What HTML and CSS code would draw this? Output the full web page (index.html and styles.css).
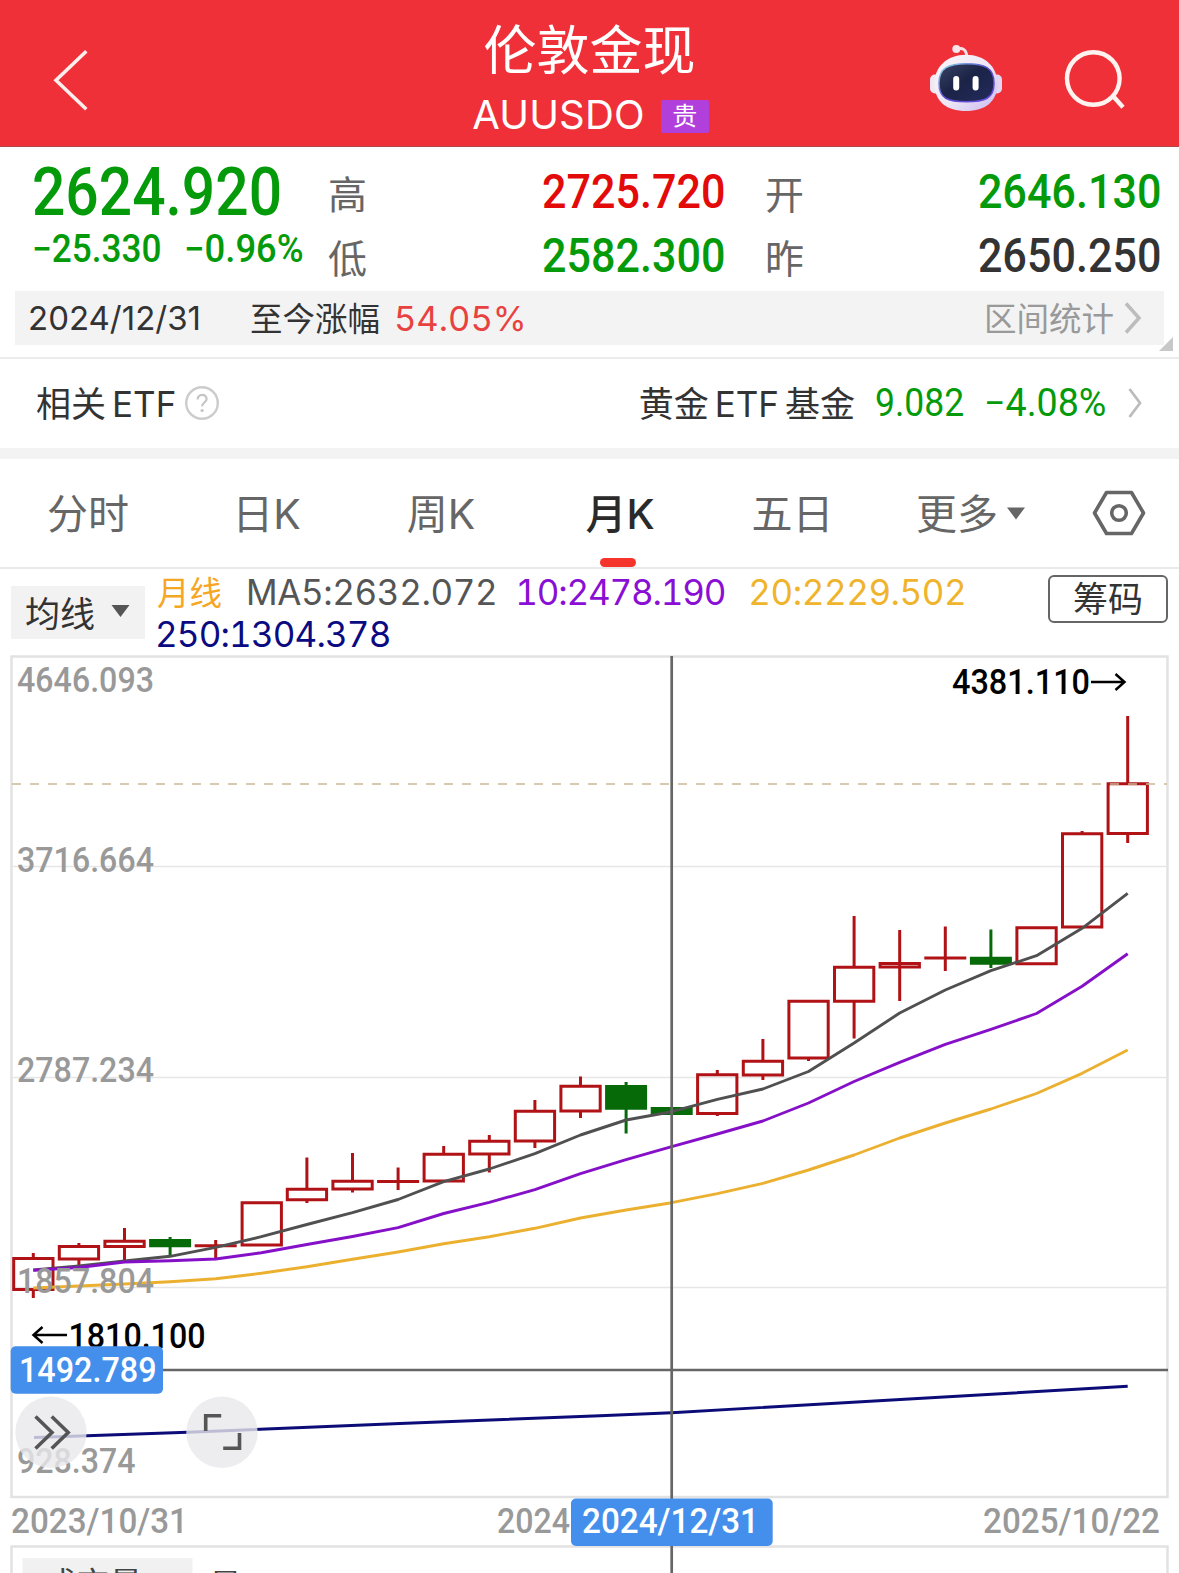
FILE: index.html
```html
<!DOCTYPE html>
<html lang="zh-CN">
<head>
<meta charset="utf-8">
<title>伦敦金现 AUUSDO</title>
<link rel="stylesheet" href="styles.css">
</head>
<body>
<header class="topbar">
  <svg class="back" width="40" height="66" viewBox="51 47 40 66"><path d="M86.3 51.3 56 80.2l30.3 29"/></svg>
  <div class="heading">
    <h1>伦敦金现</h1>
    <div class="symbol"><span>AUUSDO</span><b class="badge">贵</b></div>
  </div>
  <svg class="tools" width="210" height="80" viewBox="920 38 210 80">
    <defs>
      <linearGradient id="shell" x1="0" y1="0" x2="1" y2="1"><stop offset="0" stop-color="#fdf6f8"/><stop offset=".55" stop-color="#ece6f6"/><stop offset="1" stop-color="#c9b8f0"/></linearGradient>
      <linearGradient id="rim" x1="0" y1="0" x2="1" y2="1"><stop offset="0" stop-color="#8fe0e8"/><stop offset=".5" stop-color="#5a48c8"/><stop offset="1" stop-color="#6a4ee0"/></linearGradient>
      <linearGradient id="visor" x1="0" y1="0" x2="1" y2="1"><stop offset="0" stop-color="#3a4365"/><stop offset=".45" stop-color="#1b2347"/><stop offset="1" stop-color="#232c5c"/></linearGradient>
    </defs>
    <path d="M956 49.500c7-2.500 10.500.5 10.700 7" fill="none" stroke="#f6dfe6" stroke-width="3"/>
    <circle cx="956.300" cy="49" r="4" fill="#f9e6ec"/>
    <rect x="930" y="74.500" width="12" height="19" rx="5" fill="#f3e8f1"/>
    <rect x="990" y="74.500" width="12" height="19" rx="5" fill="#e2d6f3"/>
    <path d="M966 54.700c19 0 31.500 12 31.500 29 0 18-12.500 27.300-31.500 27.300s-31.500-9.300-31.500-27.300c0-17 12.500-29 31.500-29z" fill="url(#shell)"/>
    <path d="M966.500 63.700c18 0 27.500 4 27.500 19.500s-9 18.500-27.500 18.500-27.500-3-27.500-18.500 9.500-19.500 27.500-19.500z" fill="url(#visor)" stroke="url(#rim)" stroke-width="1.500"/>
    <rect x="953.200" y="76" width="6" height="14.500" rx="3" fill="#fff"/>
    <rect x="972.600" y="76" width="6" height="14.500" rx="3" fill="#fff"/>
    <circle cx="1093.300" cy="78.500" r="26.300" fill="none" stroke="#fff3f0" stroke-width="4.400"/>
    <path d="M1113 96l10 11.300" stroke="#fff3f0" stroke-width="4.400"/>
  </svg>
</header>

<section class="quote">
  <div class="main">
    <div class="last"><span class="din">2624.920</span></div>
    <div class="delta"><span class="din change">−25.330</span><span class="din percent">−0.96%</span></div>
  </div>
  <dl class="stats">
    <dt>高</dt><dd class="up"><span class="din">2725.720</span></dd>
    <dt>开</dt><dd class="down"><span class="din">2646.130</span></dd>
    <dt>低</dt><dd class="down"><span class="din">2582.300</span></dd>
    <dt>昨</dt><dd><span class="din">2650.250</span></dd>
  </dl>
</section>

<section class="range">
  <div class="range-bar">
    <span class="range-date">2024/12/31</span>
    <span class="range-label">至今涨幅</span>
    <span class="range-pct">54.05%</span>
    <span class="range-link">区间统计</span>
    <svg width="18" height="32" viewBox="0 0 18 32"><path d="M2 1.500 15 16 2 30.500" fill="none" stroke="#bcbcbc" stroke-width="3.500"/></svg>
  </div>
  <i class="corner"></i>
</section>

<section class="etf">
  <span class="etf-title">相关<em>ETF</em></span>
  <svg width="36" height="36" viewBox="0 0 36 36"><circle cx="18" cy="18" r="15.800" fill="none" stroke="#ccc" stroke-width="2.400"/><path d="M13.600 14.500c0-6 9-6 9-.6 0 3.600-4.500 3.600-4.500 7.400" fill="none" stroke="#c4c4c4" stroke-width="2.200"/><circle cx="18.100" cy="25.500" r="1.600" fill="#c4c4c4"/></svg>
  <span class="etf-name">黄金<em>ETF</em>基金</span>
  <span class="din etf-price">9.082</span>
  <span class="din etf-pct">−4.08%</span>
  <svg class="etf-go" width="16" height="32" viewBox="0 0 16 32"><path d="M2.500 2 13 16 2.500 30" fill="none" stroke="#bcbcbc" stroke-width="2.800"/></svg>
</section>

<nav class="tabs">
  <span>分时</span>
  <span>日K</span>
  <span>周K</span>
  <span class="active">月K</span>
  <span>五日</span>
  <span>更多<svg width="20" height="14" viewBox="0 0 20 14"><path d="M1 1.500h18L10 13.500z" fill="#666"/></svg></span>
  <svg class="gear" width="56" height="48" viewBox="0 0 56 48"><path d="M15.500 3.500h25L52.500 24l-12 20.500h-25L3.500 24z" fill="none" stroke="#666" stroke-width="3.600" stroke-linejoin="round"/><circle cx="28" cy="24" r="7.300" fill="none" stroke="#666" stroke-width="3.600"/></svg>
</nav>

<section class="indicator">
  <div class="ma-button">均线<svg width="19" height="14" viewBox="0 0 19 14"><path d="M.5 1h18l-9 12z" fill="#555"/></svg></div>
  <div class="ma-values">
    <span class="c-name">月线</span><span class="c-ma5">MA5:2632.072</span><span class="c-ma10">10:2478.190</span><span class="c-ma20">20:2229.502</span>
    <span class="c-ma250">250:1304.378</span>
  </div>
  <div class="chips">筹码</div>
</section>

<svg class="chart" width="1179" height="918" viewBox="0 655 1179 918">
  <g class="frame">
    <rect x="11.500" y="656.500" width="1156" height="840.500"/>
    <path d="M11.500 1573V1546.500H1167.500V1573"/>
  </g>
  <path class="grid" d="M13 866.500H1166M13 1077.500H1166M13 1287.500H1166"/>

  <g class="rise">
    <path d="M33.300 1253v4M33.300 1290v8M78.900 1243v3M78.900 1260v5M124.500 1228v13M124.500 1247v13M215.700 1240v18.500M306.900 1157.500v31M306.900 1200v3M352.500 1153v28M352.500 1190v2.500M398.100 1167.500v22.500M443.700 1146v8M489.300 1135v6M489.300 1155v17.500M534.900 1100v11M534.900 1142v6M580.500 1076.500v9M580.500 1112v6M717.300 1070v4M717.300 1114v2M762.900 1039v22M762.900 1076v4M808.500 1058v3M854.100 916v50M854.100 1002v36.500M899.700 930v71M945.300 926.500v44.500M1082.100 831v3M1127.700 716v67M1127.700 834v9"/>
    <path d="M13.700 1258.600h39.300v31H13.700zM59.300 1246.400h39.300v12.600H59.300zM104.900 1241.300h39.300v5.100h-39.300zM242.100 1202.700h39.300v42.300h-39.300zM287.300 1189.300h39.300v10.400h-39.300zM332.900 1181.300h39.300v7.700h-39.300zM424.100 1154.300h39.300v26.700h-39.300zM469.700 1141.300h39.300v12.700h-39.300zM515.300 1111.300h39.300v29.700h-39.300zM560.900 1086.300h39.300v24.700h-39.300zM697.600 1074.700h39.300v38.700h-39.300zM743.300 1061.300h39.300v13.700h-39.300zM788.900 1001.300h39.300v56.700h-39.300zM834.500 967.300h39.300v34h-39.300zM880.100 963.500h39.300v3.400h-39.300zM1016.900 927.700h39.300v36h-39.300zM1062.500 833.700h39.300v93.300h-39.300zM1108.100 783.700h39.300v49.700h-39.300z"/>
    <path d="M194.700 1245.700h42M377.100 1181.500h42M924.300 958h42"/>
  </g>
  <g class="fall">
    <path d="M170.100 1237v18M626.100 1082v51.500M990.900 929.500v38.500"/>
    <path class="fill" d="M149.100 1239h42v8.200h-42zM605.100 1085h42v24.700h-42zM650.700 1107h42v8h-42zM969.900 956.700h42v8h-42z"/>
  </g>

  <path class="last-price" d="M12 784H1167"/>

  <g class="lines">
    <polyline class="ma20" points="33.300,1288 78.900,1286 124.500,1284 170.100,1281.700 215.700,1278.700 261.300,1273.300 306.900,1266.700 352.500,1259.300 398.100,1252 443.700,1243.700 489.300,1236.700 534.900,1228.300 580.500,1218 626.100,1210 671.700,1202.700 717.300,1193.700 762.900,1183.300 808.500,1170 854.100,1155 899.700,1138 945.300,1123 990.900,1109 1036.500,1093.500 1082.100,1073.300 1127.700,1050"/>
    <polyline class="ma5" points="33.300,1270 78.900,1266 124.500,1261 170.100,1256.300 215.700,1247.300 261.300,1236.700 306.900,1224.500 352.500,1212.700 398.100,1199.500 443.700,1181.700 489.300,1169 534.900,1153.700 580.500,1135 626.100,1120 671.700,1111.700 717.300,1099.300 762.900,1089 808.500,1071.500 854.100,1043 899.700,1013 945.300,990 990.900,970.700 1036.500,955.700 1082.100,928.300 1127.700,893.300"/>
    <polyline class="ma10" points="33.300,1270.300 78.900,1267.500 124.500,1262 170.100,1260.700 215.700,1259 261.300,1252.700 306.900,1244.500 352.500,1236.500 398.100,1227.700 443.700,1213.500 489.300,1202.300 534.900,1189.700 580.500,1173.700 626.100,1159.700 671.700,1146.700 717.300,1134 762.900,1121 808.500,1103 854.100,1081.500 899.700,1062.300 945.300,1044.300 990.900,1029.300 1036.500,1013.500 1082.100,986.300 1127.700,953.700"/>
    <polyline class="ma250" points="34,1437.500 87,1435.700 187.500,1432.300 400,1423.500 600,1415.700 671.700,1412.700 904.700,1399.300 1127.700,1386.300"/>
  </g>

  <g class="scale">
    <text x="17" y="691.500" textLength="137" lengthAdjust="spacingAndGlyphs">4646.093</text>
    <text x="17" y="872" textLength="137" lengthAdjust="spacingAndGlyphs">3716.664</text>
    <text x="17" y="1082" textLength="137" lengthAdjust="spacingAndGlyphs">2787.234</text>
    <text x="17" y="1292.500" textLength="137" lengthAdjust="spacingAndGlyphs">1857.804</text>
    <text x="17" y="1473" textLength="118.500" lengthAdjust="spacingAndGlyphs">928.374</text>
    <text x="11" y="1533" textLength="177" lengthAdjust="spacingAndGlyphs">2023/10/31</text>
    <text x="497" y="1533" textLength="73" lengthAdjust="spacingAndGlyphs">2024</text>
    <text x="983" y="1533" textLength="177" lengthAdjust="spacingAndGlyphs">2025/10/22</text>
  </g>

  <g class="extremes">
    <text x="952" y="694" textLength="138" lengthAdjust="spacingAndGlyphs">4381.110</text>
    <path d="M1091 682H1124M1115.500 674l9 8-9 8"/>
    <text x="68.500" y="1348" textLength="137" lengthAdjust="spacingAndGlyphs">1810.100</text>
    <path d="M67 1335H34M42.500 1327l-9 8 9 8"/>
  </g>

  <path class="cross" d="M671.700 656V1573M12 1370H1168"/>

  <g class="tag">
    <rect x="10.700" y="1346.300" width="152.300" height="47.500" rx="5"/>
    <text x="19" y="1381.500" textLength="137.500" lengthAdjust="spacingAndGlyphs">1492.789</text>
    <rect x="571" y="1498.500" width="201.700" height="47.500" rx="5"/>
    <text x="582" y="1533" textLength="177" lengthAdjust="spacingAndGlyphs">2024/12/31</text>
  </g>

  <g class="round">
    <circle cx="51" cy="1432.300" r="35.700"/><circle cx="222" cy="1432.300" r="35.700"/>
    <path d="M35.500 1416.500l16.500 16-16.500 16M51.700 1416.500l16.500 16-16.500 16M205.700 1431v-15.300h15.500M223.200 1448.300h16.300V1433"/>
  </g>

  <rect x="22.500" y="1558" width="170" height="15" fill="#f1f1f1"/>
  <text class="volume" x="43.500" y="1596">成交量</text>
  <text class="volume" x="209" y="1597.500">量</text>
</svg>
</body>
</html>
```
FILE: styles.css
```css
* { box-sizing: border-box; }
body {
  margin: 0;
  width: 1179px;
  height: 1573px;
  overflow: hidden;
  background: #fff;
  color: #333;
  font-family: Inter, "Noto Sans CJK SC", sans-serif;
  font-variant-numeric: tabular-nums;
}
svg { display: block; flex: none; }
em { font-style: normal; }

.din {
  display: block;
  font-family: Roboto, sans-serif;
  font-weight: 500;
  white-space: nowrap;
  transform: scaleX(.89);
  transform-origin: 0 50%;
}

.topbar {
  height: 147px;
  background: #ef3038;
  border-bottom: 1px solid #b0474a;
  display: grid;
  grid-template-columns: 1fr 400px 1fr;
  color: #fff;
}
.back { margin: 47px 0 0 51px; fill: none; stroke: #ffeeec; stroke-width: 3.6; }
.heading { text-align: center; }
h1 { margin: 22px 0 0; font-size: 53px; line-height: 58px; font-weight: 400; }
.symbol {
  display: flex;
  align-items: center;
  justify-content: center;
  gap: 16px;
  height: 34px;
  margin-top: 19px;
  padding-left: 2px;
  font-size: 40px;
  font-weight: 400;
  letter-spacing: .2px;
}
.symbol span { padding-bottom: 4px; }
.badge {
  width: 48px;
  height: 33px;
  border-radius: 2px;
  background: #b03fdc;
  font-size: 25px;
  line-height: 32px;
  font-weight: 400;
  letter-spacing: 0;
}
.tools { justify-self: end; margin: 38px 49px 0 0; }

.quote { display: flex; height: 144px; padding: 0 0 0 32px; }
.main { width: 296px; color: #049a0a; }
.last { height: 78px; padding-top: 13px; font-size: 66px; line-height: 66px; }
.delta { display: flex; font-size: 38px; line-height: 49px; }
.change { width: 152px; transform: scaleX(.925); }
.percent { transform: scaleX(.96); }
.stats {
  margin: 14px 0 0;
  display: grid;
  grid-template-columns: 40px 357px 79px 357px;
  grid-auto-rows: 64px;
}
.stats dt { font-size: 39px; line-height: 68px; color: #666; text-align: right; }
.stats dt:nth-of-type(odd) { text-align: left; }
.stats dd { margin: 0; display: flex; justify-content: flex-end; font-size: 48.5px; line-height: 62px; }
.stats dd .din { transform: scaleX(.888); transform-origin: 100% 50%; }
.up { color: #e30a0a; }
.down { color: #049a0a; }

.range { position: relative; height: 68px; padding: 0 15px; border-bottom: 2px solid #ececec; }
.range-bar {
  display: flex;
  align-items: center;
  height: 54px;
  padding: 0 22px 0 13px;
  background: #f3f3f3;
}
.range-date { width: 222px; font-size: 33px; font-variant-numeric: normal; }
.range-label { width: 144px; font-size: 32.5px; padding-bottom: 4px; }
.range-pct { flex: 1; font-size: 34.5px; color: #e8413f; }
.range-link { font-size: 32.5px; color: #999; margin-right: 10px; padding-bottom: 4px; }
.corner {
  position: absolute;
  right: 6px;
  bottom: 6px;
  border-style: solid;
  border-width: 0 0 14px 14px;
  border-color: transparent transparent #c8c8c8;
}

.etf {
  display: flex;
  align-items: center;
  height: 100px;
  padding: 0 36px 1px;
  border-bottom: 11px solid #f3f3f3;
  font-size: 35px;
}
.etf em { margin: 0 6px; }
.etf-title em { margin-right: 8px; }
.etf-title, .etf-name { padding-bottom: 4px; }
.etf-name { margin-left: auto; }
.etf .din { font-size: 38px; font-weight: 400; color: #049a0a; }
.etf-price { margin-left: 20px; width: 109px; transform: scaleX(.935); }
.etf-pct { width: 143px; transform: scaleX(.99); }

.tabs {
  display: grid;
  grid-template-columns: 176px 181px 168px 190px 155px 202px 107px;
  align-items: center;
  height: 110px;
  border-bottom: 2px solid #e9e9e9;
  font-size: 41px;
  color: #666;
}
.tabs span { display: flex; align-items: center; justify-content: center; height: 108px; padding-bottom: 4px; }
.tabs span svg { margin: 3px 0 0 8px; }
.gear { margin-left: 19px; }
.tabs .active { position: relative; font-weight: 500; color: #2a2a2a; }
.active::after {
  content: "";
  position: absolute;
  bottom: 0;
  width: 36px;
  height: 9px;
  border-radius: 5px;
  background: #f5352c;
  transform: translateX(-2px);
}

.indicator { display: flex; height: 86px; padding: 0 11px; font-size: 35px; }
.ma-button {
  display: flex;
  align-items: center;
  gap: 16px;
  width: 134px;
  height: 53px;
  margin-top: 17px;
  padding: 0 0 3px 14px;
  background: #f2f2f2;
}
.ma-values {
  width: 830px;
  margin: 2px 0 0 10px;
  line-height: 42px;
  white-space: nowrap;
}
.c-name { font-size: 32.5px; color: #f5a623; margin: 0 24px 0 2px; }
.c-ma5 { color: #555; margin-right: 18px; letter-spacing: -.4px; }
.c-ma10 { color: #8a0fd4; margin-right: 23px; letter-spacing: -1.2px; }
.c-ma20 { color: #efb42c; letter-spacing: -.45px; }
.c-ma250 { display: block; margin-top: -2px; color: #0a0a82; letter-spacing: -.85px; }
.chips {
  width: 120px;
  height: 48px;
  margin: 6px 0 0 auto;
  border: 2px solid #666;
  border-radius: 6px;
  line-height: 44px;
  text-align: center;
}

.chart text {
  font-family: Roboto, "Noto Sans CJK SC", sans-serif;
  font-size: 35px;
}
.frame { fill: none; stroke: #e2e2e2; stroke-width: 2.5; }
.grid { stroke: #e6e6e6; stroke-width: 1.5; }
.rise { fill: none; stroke: #b01216; stroke-width: 3; }
.fall { fill: none; stroke: #066a08; stroke-width: 3; }
.fall .fill { fill: #066a08; stroke: none; }
.last-price { stroke: #ccb898; stroke-width: 1.7; stroke-dasharray: 9 9; }
.lines { fill: none; stroke-width: 2.9; stroke-linejoin: round; }
.ma5 { stroke: #505050; }
.ma10 { stroke: #8510c8; }
.ma20 { stroke: #ecb030; }
.ma250 { stroke: #0c0c78; }
.scale text { fill: #999; font-weight: 500; }
.extremes text { fill: #000; font-weight: 500; }
.extremes path { fill: none; stroke: #000; stroke-width: 2.5; }
.cross { fill: none; stroke: #666; stroke-width: 2.7; }
.tag rect { fill: #448fec; }
.tag text { fill: #fff; font-weight: 500; }
.round circle { fill: #e9e9ec; fill-opacity: .8; }
.round path { fill: none; stroke: #555; stroke-width: 3.6; }
.chart .volume { font-size: 33px; fill: #444; }
```
